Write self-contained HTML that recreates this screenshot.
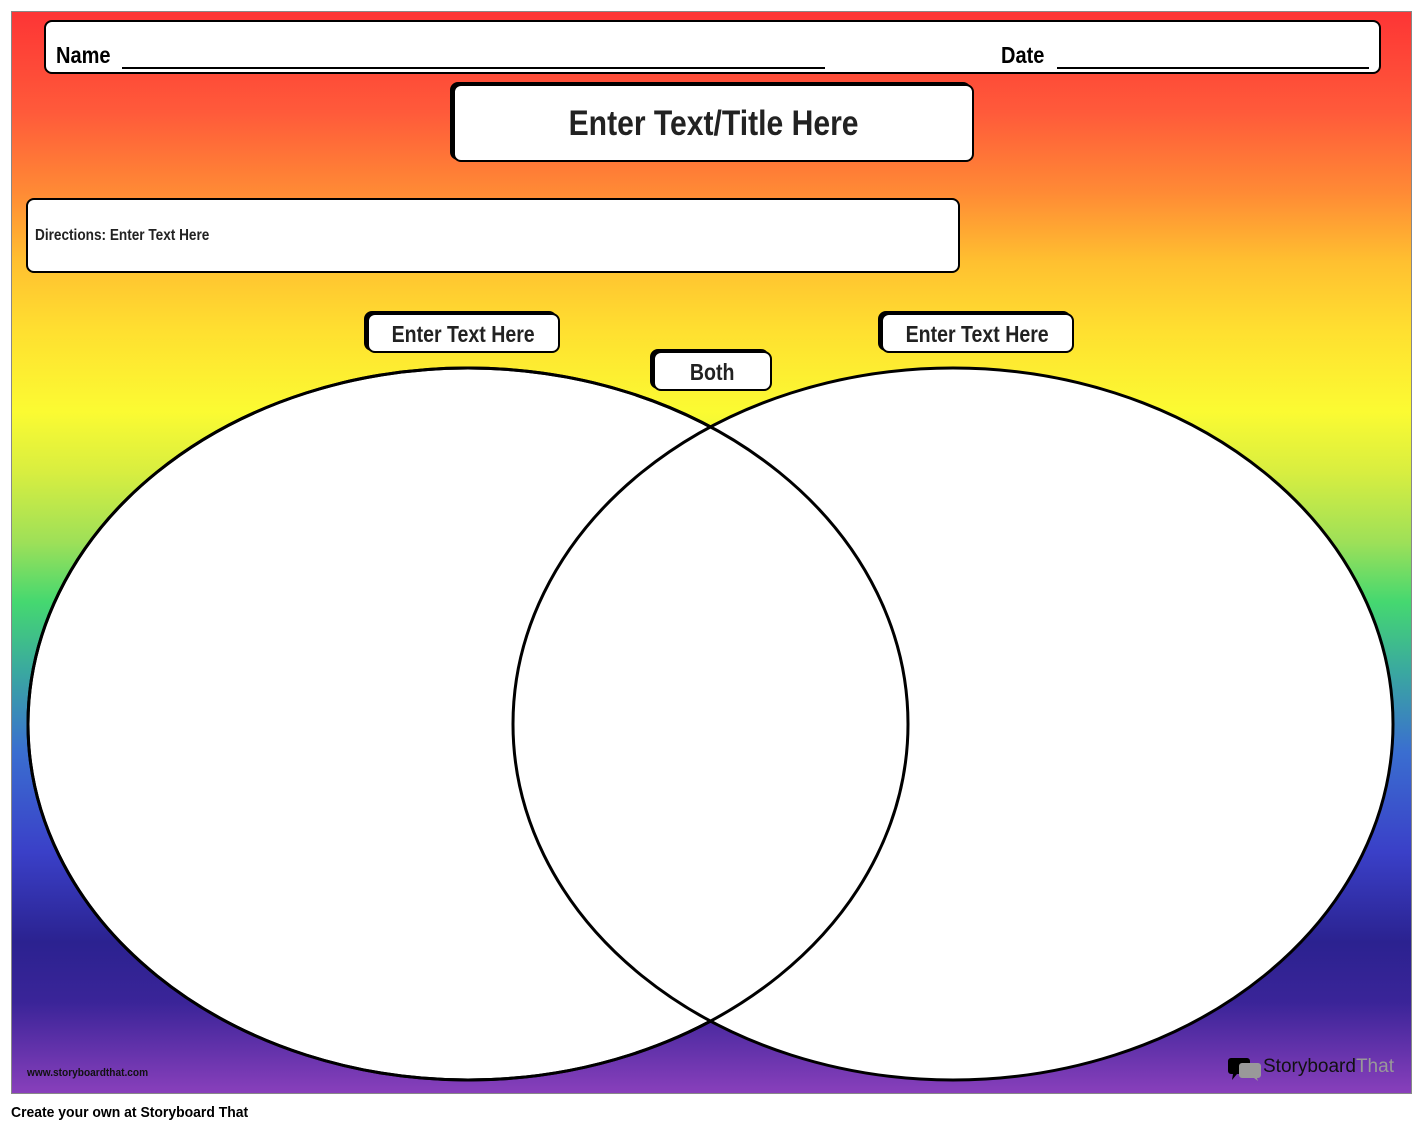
<!DOCTYPE html>
<html><head><meta charset="utf-8"><style>
body{margin:0;width:1425px;height:1132px;background:#fff;position:relative;overflow:hidden;font-family:"Liberation Sans",sans-serif}
#c{position:absolute;left:11px;top:11px;width:1401px;height:1083px;border:1px solid #888;box-sizing:border-box;
background:linear-gradient(180deg,#fd3535 0px,#ff5a3a 100px,#ff8a35 180px,#ffc030 250px,#ffe030 320px,#fbfb32 400px,#d8ee40 460px,#9ee058 530px,#45d870 590px,#3aa8a0 660px,#3a6ed0 740px,#3a40c8 840px,#2b2290 930px,#3a2498 990px,#8a40bc 1083px)}
.b{position:absolute;background:#fff;border:2px solid #000;border-radius:8px;box-sizing:border-box;box-shadow:-3px -2px 0 #000;font-family:"Liberation Sans",sans-serif;font-weight:bold;color:#222;text-align:center}
.n{display:inline-block;transform:scaleX(.85)}
</style></head><body>
<div id="c"></div>
<div class="b" style="left:44px;top:20px;width:1337px;height:54px;box-shadow:none;text-align:left">
<span style="position:absolute;left:10px;top:20px;font-size:23px;color:#000;transform:scaleX(.87);transform-origin:left">Name</span>
<div style="position:absolute;left:76px;top:45px;width:703px;border-top:2px solid #000"></div>
<span style="position:absolute;left:955px;top:20px;font-size:23px;color:#000;transform:scaleX(.87);transform-origin:left">Date</span>
<div style="position:absolute;left:1011px;top:45px;width:312px;border-top:2px solid #000"></div></div>
<div class="b" style="left:453px;top:84px;width:521px;height:78px;font-size:35px;line-height:76px"><span class="n" style="transform:scaleX(.86)">Enter Text/Title Here</span></div>
<div class="b" style="left:26px;top:198px;width:934px;height:75px;box-shadow:none;text-align:left;font-size:16px;line-height:72px;padding-left:7px"><span class="n" style="transform-origin:left">Directions: Enter Text Here</span></div>
<svg style="position:absolute;left:0;top:0" width="1425" height="1132">
<ellipse cx="468" cy="724" rx="440" ry="356" fill="#fff" stroke="#000" stroke-width="3"/>
<ellipse cx="953" cy="724" rx="440" ry="356" fill="#fff" stroke="#000" stroke-width="3"/>
<ellipse cx="468" cy="724" rx="440" ry="356" fill="none" stroke="#000" stroke-width="3"/>
</svg>
<div class="b" style="left:367px;top:313px;width:193px;height:40px;font-size:23px;line-height:38px"><span class="n">Enter Text Here</span></div>
<div class="b" style="left:881px;top:313px;width:193px;height:40px;font-size:23px;line-height:38px"><span class="n">Enter Text Here</span></div>
<div class="b" style="left:653px;top:351px;width:119px;height:40px;font-size:23px;line-height:38px"><span class="n">Both</span></div>
<div style="position:absolute;left:27px;top:1067px;font-size:11px;font-weight:bold;color:#111;transform:scaleX(.92);transform-origin:left">www.storyboardthat.com</div>
<svg style="position:absolute;left:1228px;top:1057px" width="34" height="26"><path d="M3 1h16a3 3 0 0 1 3 3v10a3 3 0 0 1-3 3H9l-5 6 1-6H3a3 3 0 0 1-3-3V4a3 3 0 0 1 3-3z" fill="#000"/><path d="M14 6h16a3 3 0 0 1 3 3v9a3 3 0 0 1-3 3h-1l1 3-4-3H14a3 3 0 0 1-3-3V9a3 3 0 0 1 3-3z" fill="#999"/></svg>
<div style="position:absolute;left:1263px;top:1056px;font-size:19px;color:#111">Storyboard<span style="color:#999">That</span></div>
<div style="position:absolute;left:11px;top:1104px;font-size:15px;color:#000;font-weight:bold;transform:scaleX(.93);transform-origin:left">Create your own at Storyboard That</div>
</body></html>
